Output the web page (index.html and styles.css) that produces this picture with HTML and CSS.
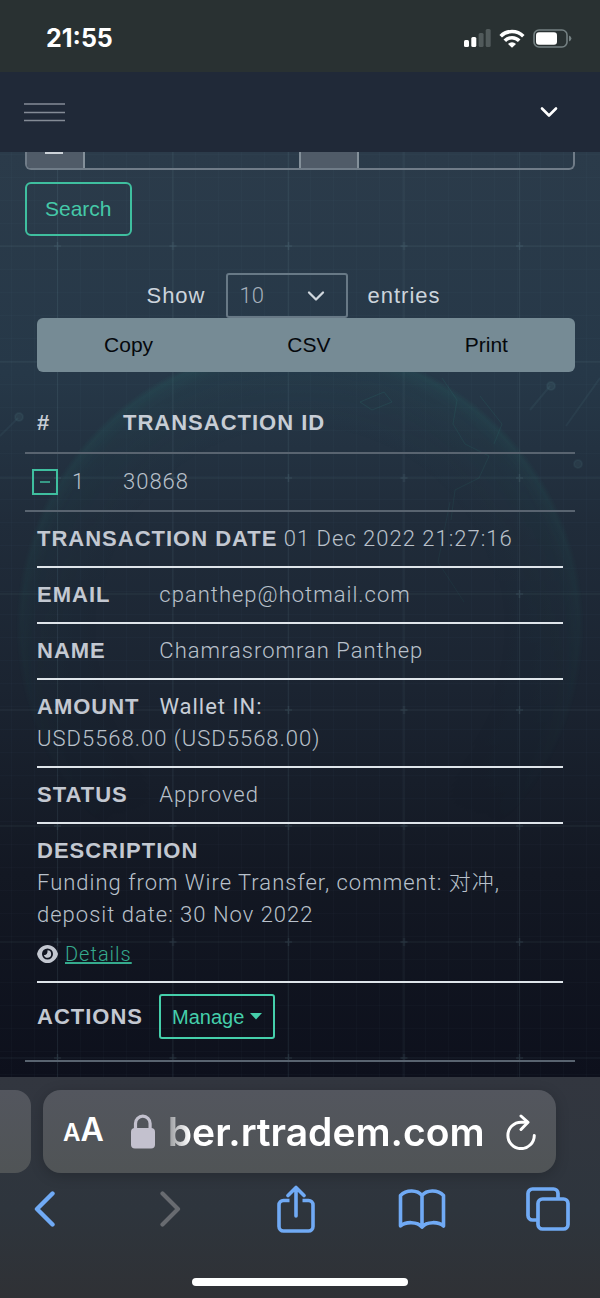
FILE: index.html
```html
<!DOCTYPE html>
<html lang="en">
<head>
<meta charset="utf-8">
<meta name="viewport" content="width=device-width, initial-scale=1">
<title>Transactions</title>
<link rel="stylesheet" href="styles.css">
</head>
<body>
<div class="status-bar">
  <time class="clock">21:55</time>
  <div class="status-icons">
    <svg width="27" height="18" viewBox="0 0 27 18" aria-hidden="true"><g fill="#fff"><rect y="11" width="5" height="7" rx="1.5"/><rect x="7.3" y="8" width="5" height="10" rx="1.5"/><g fill="#515a5b"><rect x="14.6" y="4" width="5" height="14" rx="1.5"/><rect x="21.7" width="5" height="18" rx="1.5"/></g></g></svg>
    <svg width="26" height="19" viewBox="0 0 26 19" aria-hidden="true"><g fill="none" stroke="#fff" stroke-width="3.600"><path d="M1.700 7.200a16 16 0 0 1 22.600 0"/><path d="M5.800 11.800a9.900 9.900 0 0 1 14.400 0"/></g><path d="M13 18.800 9 14.900a5.800 5.800 0 0 1 8 0z" fill="#fff"/></svg>
    <svg width="39" height="19" viewBox="0 0 39 19" aria-hidden="true"><rect x="1" y="1" width="33" height="17" rx="5" fill="none" stroke="#748082" stroke-width="1.6"/><rect x="3" y="3.2" width="21" height="12.6" rx="3" fill="#fff"/><path d="M36 6.500q2.400 1 2.400 3t-2.400 3z" fill="#748082"/></svg>
  </div>
</div>

<header class="nav">
  <button class="icon-button" aria-label="Menu"><svg width="41" height="20" viewBox="0 0 41 20"><path d="M0 2h41M0 10.500h41M0 18.500h41" stroke="#848b96" stroke-width="1.700"/></svg></button>
  <button class="icon-button account" aria-label="Account"><svg width="18" height="12" viewBox="0 0 18 12"><path d="m2 2.500 7 7 7-7" fill="none" stroke="#fff" stroke-width="2.600" stroke-linecap="round" stroke-linejoin="round"/></svg></button>
</header>

<main class="content">
  <svg class="backdrop" width="100%" height="100%" aria-hidden="true">
    <defs>
      <pattern id="fine" x="57" y="94" width="23" height="23" patternUnits="userSpaceOnUse"><path d="M0 .5h23M.5 0v23" stroke="#7fb0b8" stroke-opacity=".025"/></pattern>
      <pattern id="grid" x="50" y="86" width="115.500" height="116" patternUnits="userSpaceOnUse"><path d="M0 8h115.500M7.500 0v116" stroke="#86a8b0" stroke-opacity=".1"/><path d="M4 8h7M7.500 4v8" stroke="#86b0b8" stroke-opacity=".12" stroke-width="1.500"/></pattern>
      <radialGradient id="globe"><stop offset=".7" stop-color="#1b6660" stop-opacity="0"/><stop offset=".93" stop-color="#1d7068" stop-opacity=".07"/><stop offset=".98" stop-color="#26897a" stop-opacity=".15"/><stop offset="1" stop-color="#26897a" stop-opacity="0"/></radialGradient>
      <linearGradient id="fade" x2="0" y2="1"><stop offset="0" stop-color="#fff"/><stop offset=".8" stop-color="#000"/></linearGradient>
      <mask id="top"><rect x="-20" y="180" width="640" height="620" fill="url(#fade)"/></mask>
    </defs>
    <rect width="100%" height="100%" fill="url(#fine)"/>
    <rect width="100%" height="100%" fill="url(#grid)"/>
    <g mask="url(#top)">
      <circle cx="300" cy="475" r="284" fill="url(#globe)"/>
      <g fill="none" stroke="#2b8376" stroke-opacity=".2"><path d="M442 226l15 22-4 24 12 20 24 12-10 22-24 12-4 30M480 244l22 28-8 20M360 250l24-10 8 10-20 8zM450 350l-12 60 26 40"/></g>
      <g stroke="#5c8b90" stroke-opacity=".12" stroke-width="2" fill="#5c8b90" fill-opacity=".16"><path d="M0 284 18 266M530 258l20-24M566 274l34-48"/><circle cx="19" cy="265" r="4"/><circle cx="551" cy="234" r="4"/><circle cx="578" cy="312" r="4"/></g>
    </g>
  </svg>

  <div class="date-group">
    <span class="addon"><i class="calendar-edge"></i></span>
    <input class="date-input" type="text" aria-label="From date">
    <span class="addon"></span>
    <input class="date-input" type="text" aria-label="To date">
  </div>
  <button class="search">Search</button>

  <div class="length">
    <label for="entries">Show</label>
    <span class="select-wrap">
      <select id="entries"><option>10</option><option>25</option></select>
      <svg class="select-arrow" width="18" height="12" viewBox="0 0 18 12" aria-hidden="true"><path d="m2 2.500 7 7 7-7" fill="none" stroke="#d0d7dd" stroke-width="2.300" stroke-linecap="round" stroke-linejoin="round"/></svg>
    </span>
    <span>entries</span>
  </div>
  <div class="exports">
    <button>Copy</button><button>CSV</button><button>Print</button>
  </div>

  <table class="transactions">
    <thead><tr><th class="number">#</th><th>TRANSACTION ID</th></tr></thead>
    <tbody>
      <tr>
        <td class="number"><div class="number-cell"><button class="toggle" aria-label="Collapse row"><svg width="10" height="2" viewBox="0 0 10 2"><path d="M0 1h10" stroke="#3fbf9f" stroke-width="1.500"/></svg></button>1</div></td>
        <td>30868</td>
      </tr>
      <tr>
        <td class="child" colspan="2">
          <ul class="details">
            <li><b>TRANSACTION DATE</b> 01 Dec 2022 21:27:16</li>
            <li><b>EMAIL</b> cpanthep@hotmail.com</li>
            <li><b>NAME</b> Chamrasromran Panthep</li>
            <li><b>AMOUNT</b> <span class="wallet">Wallet IN:</span><br>USD5568.00 (USD5568.00)</li>
            <li><b>STATUS</b> Approved</li>
            <li><b>DESCRIPTION</b><br>Funding from Wire Transfer, comment: 对冲, deposit date: 30 Nov 2022
              <div class="more">
                <svg width="21" height="18" viewBox="0 0 21 18" aria-hidden="true"><path fill="#c3c7d0" fill-rule="evenodd" d="M10.500 0C5.300 0 1.500 3.800.2 8.300a2.200 2.200 0 0 0 0 1.400C1.500 14.200 5.300 18 10.500 18s9-3.800 10.300-8.300a2.200 2.200 0 0 0 0-1.400C19.500 3.800 15.700 0 10.500 0zm0 3.500a5.500 5.500 0 1 1 0 11 5.500 5.500 0 0 1 0-11z"/><path fill="#c3c7d0" d="M10.500 5.300a3.700 3.700 0 1 1-3.600 4.600c1.900.5 4.100-.8 3.600-4.600z"/></svg>
                <a href="#details">Details</a>
              </div>
            </li>
            <li class="actions"><b>ACTIONS</b> <button class="manage">Manage<svg width="12" height="7" viewBox="0 0 12 7" aria-hidden="true"><path d="M0 0h12L6 6.500z" fill="#45cfab"/></svg></button></li>
          </ul>
        </td>
      </tr>
    </tbody>
  </table>
</main>

<footer class="browser">
  <div class="tabs">
    <div class="tab-peek"></div>
    <div class="address">
      <button class="text-size" aria-label="Page settings"><small>A</small>A</button>
      <svg class="lock" width="26" height="35" viewBox="0 0 26 35" aria-hidden="true"><path d="M5.500 16V9.500a7.300 7.300 0 0 1 14.600 0V16" fill="none" stroke="#c3c1ce" stroke-width="3.200"/><rect x="1" y="14" width="24" height="20.500" rx="4" fill="#c3c1ce"/></svg>
      <input class="url" type="text" value="ber.rtradem.com" aria-label="Address">
      <button class="icon-button" aria-label="Reload"><svg width="30" height="36" viewBox="0 0 30 36"><g fill="none" stroke="#fff" stroke-width="3" stroke-linecap="round" stroke-linejoin="round"><path d="M28.300 21.500a13.200 13.200 0 1 1-13.200-13.300h6"/><path d="m15 2 7 6.300-7 7.200"/></g></svg></button>
    </div>
  </div>
  <nav class="toolbar">
    <button aria-label="Back"><svg width="21" height="36" viewBox="0 0 21 36"><path d="M18.500 2.500 3 18l15.500 15.500" fill="none" stroke="#70aaf5" stroke-width="4.400" stroke-linecap="round" stroke-linejoin="round"/></svg></button>
    <button aria-label="Forward"><svg width="21" height="36" viewBox="0 0 21 36"><path d="M2.500 2.500 18 18 2.500 33.500" fill="none" stroke="#686b70" stroke-width="4.200" stroke-linecap="round" stroke-linejoin="round"/></svg></button>
    <button aria-label="Share"><svg width="38" height="48" viewBox="0 0 38 48"><g fill="none" stroke="#70aaf5" stroke-width="3.600" stroke-linejoin="round"><path d="M12.500 15.500H6.500a4.500 4.500 0 0 0-4.500 4.500v21.500A4.500 4.500 0 0 0 6.500 46h25a4.500 4.500 0 0 0 4.500-4.500V20a4.500 4.500 0 0 0-4.500-4.500h-6"/><path d="M19 31V3M11 10.500 19 2.500l8 8" stroke-linecap="round"/></g></svg></button>
    <button aria-label="Bookmarks"><svg width="48" height="40" viewBox="0 0 48 40"><path d="M24 6.500C19.500.8 8.500.2 2.500 6.500V37c5-4.600 17-4.600 21.500 1 4.500-5.600 16.500-5.600 21.500-1V6.500C39.500.2 28.500.8 24 6.500zM24 6.500V38" fill="none" stroke="#70aaf5" stroke-width="3.600" stroke-linejoin="round"/></svg></button>
    <button aria-label="Tabs"><svg width="44" height="44" viewBox="0 0 44 44"><g fill="none" stroke="#70aaf5" stroke-width="3.700"><rect x="12" y="12" width="30" height="30" rx="4.500"/><path d="M32 12V6.500A4.500 4.500 0 0 0 27.500 2h-21A4.500 4.500 0 0 0 2 6.500v22A4.500 4.500 0 0 0 6.500 33H12"/></g></svg></button>
  </nav>
  <div class="home-indicator"></div>
</footer>
</body>
</html>
```

FILE: styles.css
```css
* {
  box-sizing: border-box;
}

body {
  margin: 0;
  background: #2f3238;
  color: #b9c1cb;
  font: 22px/32px "Liberation Sans", "Noto Sans CJK SC", sans-serif;
}

button,
input,
select {
  margin: 0;
  padding: 0;
  border: 0;
  background: none;
  color: inherit;
  font: inherit;
}

svg {
  display: block;
}

/* Phone status bar */
.status-bar {
  display: flex;
  align-items: center;
  justify-content: space-between;
  padding: 22px 28px 18px 46px;
  background: #293132;
}

.clock {
  color: #fff;
  font: 700 25px/32px Inter, sans-serif;
}

.status-icons {
  display: flex;
  align-items: center;
  gap: 8px;
}

/* Site header */
.nav {
  display: flex;
  align-items: center;
  justify-content: space-between;
  height: 80px;
  padding: 0 42px 0 24px;
  background: #202938;
}

.icon-button {
  display: block;
}

/* Page content */
.content {
  position: relative;
  padding: 0 25px 15px;
  background: linear-gradient(#2b3b4a 0, #263848 24%, #202c3a 40%, #1b2431 58%, #131823 78%, #0d101c 100%);
  letter-spacing: 1px;
}

.content > * {
  position: relative;
}

.content > .backdrop {
  position: absolute;
  inset: 0;
}

.date-group {
  display: flex;
  height: 18px;
  overflow: hidden;
  border: 2px solid #707c88;
  border-top: 0;
  border-radius: 0 0 6px 6px;
}

.addon {
  flex: 0 0 60px;
  border: 2px solid #84909a;
  border-width: 0 2px;
  background: #505b68;
}

.addon:first-child {
  flex-basis: 58px;
  border-left: 0;
}

.calendar-edge {
  display: block;
  width: 18px;
  height: 2px;
  margin-left: 18px;
  background: #ccd2d8;
}

.date-input {
  flex: 1;
  min-width: 0;
}

.search {
  display: block;
  height: 54px;
  margin-top: 12px;
  padding: 0 18px;
  border: 2px solid #3fbf9f;
  border-radius: 6px;
  color: #45c9a8;
  font-size: 21px;
}

.length {
  display: flex;
  align-items: center;
  justify-content: center;
  gap: 20px;
  margin-top: 37px;
  padding-right: 13px;
  color: #ccd4dc;
}

.select-wrap {
  position: relative;
}

.select-wrap select {
  display: block;
  width: 122px;
  height: 45px;
  padding: 0 12px;
  border: 2px solid #687986;
  border-radius: 3px;
  appearance: none;
  color: #a5b0bb;
  font: 300 22px/32px Roboto, sans-serif;
}

.select-arrow {
  position: absolute;
  top: 17px;
  right: 23px;
  pointer-events: none;
}

.exports {
  display: flex;
  margin-left: 12px;
  overflow: hidden;
  border-radius: 6px;
  background: #768b95;
}

.exports button {
  flex: auto;
  height: 54px;
  color: #05080c;
  font-size: 21px;
}

.transactions {
  width: 100%;
  margin-top: 22px;
  border-collapse: collapse;
}

.transactions th,
.transactions td {
  padding: 12px;
  border-bottom: 2px solid #596470;
  text-align: left;
}

.transactions td {
  font: 300 22px/32px Roboto, "Noto Sans CJK SC", sans-serif;
}

.transactions th {
  padding: 13px 12px;
  color: #c7cdd5;
}

.transactions .number {
  width: 86px;
}

.number-cell {
  display: flex;
  align-items: center;
  gap: 14px;
  margin-left: -5px;
}

.toggle {
  display: grid;
  place-items: center;
  width: 26px;
  height: 26px;
  border: 2px solid #3fbf9f;
}

.transactions .child {
  padding: 0 12px 10px;
}

.details {
  margin: 0;
  padding: 0;
  list-style: none;
}

.details li {
  padding: 11px 0;
  border-bottom: 2px solid #dfe5ea;
}

.details li:last-child {
  border-bottom: 0;
}

.details b {
  display: inline-block;
  min-width: 116px;
  color: #c3c8d1;
  font: 700 22px/32px "Liberation Sans", sans-serif;
}

.wallet {
  color: #c8ced7;
  font-weight: 400;
}

.more {
  display: flex;
  align-items: center;
  gap: 7px;
  margin-top: 7px;
  font-size: 20px;
}

.more a {
  color: #35aa8d;
}

.details .actions {
  display: flex;
  align-items: center;
  gap: 6px;
}

.manage {
  display: flex;
  align-items: center;
  gap: 6px;
  height: 45px;
  padding: 0 11px;
  border: 2px solid #45cfab;
  border-radius: 3px;
  color: #45cfab;
  font: 20px/32px "Liberation Sans", sans-serif;
}

/* Browser bar */
.browser {
  padding: 13px 0 12px;
  background: linear-gradient(#32363f, #2e353d 60%, #2f3135);
}

.tabs {
  display: flex;
  gap: 12px;
  padding-right: 44px;
}

.tab-peek {
  width: 31px;
  border-radius: 0 16px 16px 0;
  background: linear-gradient(#53565e, #505456);
}

.address {
  display: flex;
  flex: 1;
  align-items: center;
  min-width: 0;
  height: 83px;
  padding: 0 20px;
  border-radius: 18px;
  background: linear-gradient(#53565e, #505456);
  box-shadow: 0 3px 14px #0003;
}

.text-size {
  color: #fff;
  font: 600 32px/40px Inter, sans-serif;
}

.text-size small {
  font-size: 24px;
}

.lock {
  flex: none;
  margin-left: 26px;
}

.url {
  flex: 1;
  min-width: 0;
  margin-left: 12px;
  color: #fff;
  font: 600 39px/52px Inter, sans-serif;
  mask-image: linear-gradient(90deg, #0006, #000 22px);
}

.toolbar {
  display: flex;
  justify-content: space-between;
  padding: 10px 28px 10px 20px;
}

.toolbar button {
  display: grid;
  place-items: center;
  width: 48px;
  height: 52px;
}

.home-indicator {
  width: 36%;
  height: 8px;
  margin: 33px auto 0;
  border-radius: 4px;
  background: #fff;
}
```
